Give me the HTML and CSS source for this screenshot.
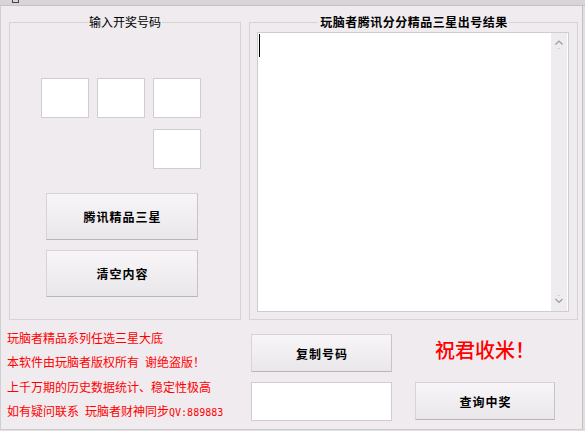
FILE: index.html
```html
<!DOCTYPE html>
<html lang="zh-CN">
<head>
<meta charset="utf-8">
<title>玩脑者腾讯分分精品三星</title>
<link rel="stylesheet" href="styles.css">
</head>
<body>
<div class="window">
  <div class="titlebar"><span class="sysicon"></span></div>
  <div class="form">
    <div class="groups">
      <fieldset class="group group-left">
        <legend class="legend">输入开奖号码</legend>
        <div class="group-body-left">
          <div class="num-grid">
            <div class="num-box"></div>
            <div class="num-box"></div>
            <div class="num-box"></div>
            <div class="num-box num-box-4"></div>
          </div>
          <button class="btn btn-wide btn-first">腾讯精品三星</button>
          <button class="btn btn-wide btn-second">清空内容</button>
        </div>
      </fieldset>
      <fieldset class="group group-right">
        <legend class="legend legend-bold">玩脑者腾讯分分精品三星出号结果</legend>
        <div class="group-body-right">
          <div class="output">
            <div class="output-text"><span class="caret"></span></div>
            <div class="vscroll">
              <svg class="arrow" width="16" height="10" viewBox="0 0 16 10"><polyline points="4.5,4.5 8,1 11.5,4.5" fill="none" stroke="#9c9b9c" stroke-width="1.2"/><line x1="6.5" y1="8.5" x2="9.5" y2="8.5" stroke="#d6d4d6" stroke-width="1"/></svg>
              <svg class="arrow" width="16" height="10" viewBox="0 0 16 10"><line x1="6.5" y1="1.5" x2="9.5" y2="1.5" stroke="#d6d4d6" stroke-width="1"/><polyline points="4.5,5 8,8.5 11.5,5" fill="none" stroke="#9c9b9c" stroke-width="1.2"/></svg>
            </div>
          </div>
        </div>
      </fieldset>
    </div>
    <div class="bottom">
      <div class="notes">
        <p>玩脑者精品系列任选三星大底</p>
        <p>本软件由玩脑者版权所有<span class="half"> </span>谢绝盗版！</p>
        <p>上千万期的历史数据统计、稳定性极高</p>
        <p>如有疑问联系<span class="half"> </span>玩脑者财神同步<span class="half">QV:889883</span></p>
      </div>
      <div class="col col-mid">
        <button class="btn btn-copy">复制号码</button>
        <div class="num-box result-box"></div>
      </div>
      <div class="col col-right">
        <div class="slogan">祝君收米！</div>
        <button class="btn btn-query">查询中奖</button>
      </div>
    </div>
  </div>
</div>
</body>
</html>
```

FILE: styles.css
```css
* { box-sizing: border-box; }
html, body { margin: 0; padding: 0; }
body {
  width: 585px;
  height: 431px;
  overflow: hidden;
  background: #e2dfe2;
  font-family: "Noto Sans CJK SC", "Liberation Sans", sans-serif;
  font-size: 12px;
  color: #000;
}
.window {
  width: 585px;
  height: 431px;
  display: flex;
  flex-direction: column;
  background: #e2dfe2;
}
.titlebar {
  flex: none;
  height: 6px;
  background: #d8d5d8;
  border-bottom: 1px solid #c6c3c6;
  padding-left: 12px;
}
.sysicon {
  display: block;
  width: 7px;
  height: 3px;
  border: 1px solid #444;
  border-top: none;
}
.form {
  flex: 1;
  margin: 0 2px 1px 0;
  background: #efebef;
  border-left: 1px solid #d2cfd2;
  border-right: 1px solid #c4c1c4;
  border-bottom: 1px solid #cfcccf;
  padding: 9px 0 0 6px;
}
.groups {
  display: flex;
  gap: 8px;
  margin-left: 2px;
}
.group {
  margin: 0;
  padding: 0;
  min-width: 0;
  height: 305px;
  border: 1px solid #d6d3d6;
}
.group-left { width: 232px; }
.group-right { width: 329px; }
.group-body-left { padding: 49px 0 0 31px; }
.group-body-right { padding: 3px 0 0 7px; }
.legend {
  margin: 0 auto;
  padding: 0 1px;
  line-height: 14px;
  font-size: 12px;
  white-space: nowrap;
}
.legend-bold {
  font-weight: bold;
  letter-spacing: 0.5px;
  padding: 0 1px 0 2px;
}
.num-grid {
  display: grid;
  grid-template-columns: repeat(3, 48px);
  grid-auto-rows: 40px;
  column-gap: 8px;
  row-gap: 11px;
}
.num-box {
  background: #fff;
  border: 1px solid #d0cdd0;
}
.num-box-4 { grid-column: 3; }
.btn {
  display: flex;
  align-items: center;
  justify-content: center;
  padding: 0 0 0 1px;
  margin: 0;
  font-family: "Noto Sans CJK SC", sans-serif;
  font-size: 12px;
  font-weight: bold;
  letter-spacing: 1px;
  color: #000;
  background: linear-gradient(#f7f5f7, #f1eff1 45%, #e9e7e9);
  border: 1px solid #d6d4d6;
  border-bottom-color: #b8b6b8;
  border-right-color: #c6c4c6;
}
.btn-wide {
  width: 152px;
  height: 47px;
  margin-left: 5px;
}
.btn-first { margin-top: 24px; }
.btn-second { margin-top: 10px; }
.output {
  width: 312px;
  height: 280px;
  display: flex;
  background: #fff;
  border: 1px solid #cfcccf;
}
.output-text {
  flex: 1;
  padding: 1px 0 0 1px;
}
.caret {
  display: block;
  width: 1px;
  height: 23px;
  background: #000;
}
.vscroll {
  width: 16px;
  background: #eeecee;
  display: flex;
  flex-direction: column;
  justify-content: space-between;
  padding: 7px 0;
  margin-right: 1px;
}
.arrow { display: block; }
.bottom {
  display: flex;
  margin-top: 6px;
}
.notes {
  width: 244px;
  color: #f00;
  line-height: 23.7px;
}
.notes p {
  margin: 0;
  white-space: nowrap;
}
.half {
  font-family: "DejaVu Sans Mono", monospace;
  font-size: 10px;
}
.col {
  display: flex;
  flex-direction: column;
  padding-top: 8px;
}
.col-mid { width: 141px; }
.col-right {
  width: 140px;
  margin-left: 23px;
}
.btn-copy { height: 38px; }
.result-box {
  height: 39px;
  margin-top: 10px;
}
.slogan {
  height: 38px;
  line-height: 32px;
  text-align: center;
  color: #f00;
  font-size: 20px;
  font-weight: 500;
  white-space: nowrap;
}
.btn-query {
  height: 38px;
  margin-top: 10px;
}
```
